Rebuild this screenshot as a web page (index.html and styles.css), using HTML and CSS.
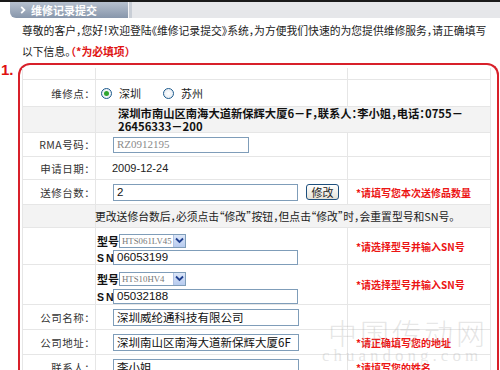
FILE: index.html
```html
<!DOCTYPE html>
<html lang="zh">
<head>
<meta charset="utf-8">
<title>维修记录提交</title>
<link rel="stylesheet" href="styles.css">
</head>
<body>
<div class="topbar">
  <div class="tab"><svg class="arrow" width="6" height="8" viewBox="0 0 6 8"><path d="M1.2 0.8 L4.4 4 L1.2 7.2" fill="none" stroke="#fff" stroke-width="1.8"/></svg>维修记录提交</div>
  <div class="sep"></div>
  <div class="fill"></div>
</div>
<div class="intro">尊敬的客户，您好！欢迎登陆《维修记录提交》系统，为方便我们快速的为您提供维修服务，请正确填写<br>以下信息。<span class="req">（*为必填项）</span></div>
<div class="main">
  <div class="num">1.</div>
  <div class="box">
    <div class="table">
      <div class="row r-empty"><div class="c1"></div><div class="c2"></div><div class="c3"></div></div>
      <div class="row r-radio">
        <div class="c1 label">维修点：</div>
        <div class="c2 radios">
          <span class="radio checked"></span><span class="rlabel">深圳</span>
          <span class="radio"></span><span class="rlabel">苏州</span>
        </div>
        <div class="c3"></div>
      </div>
      <div class="row r-addr gray">
        <div class="c1"></div>
        <div class="c23 addr">深圳市南山区南海大道新保辉大厦6－F，联系人：李小姐，电话：0755－<br>26456333－200</div>
      </div>
      <div class="row r-rma">
        <div class="c1 label">RMA号码：</div>
        <div class="c2 val"><div class="inp w136 rma">RZ0912195</div></div>
        <div class="c3"></div>
      </div>
      <div class="row r-date">
        <div class="c1 label">申请日期：</div>
        <div class="c2 val date">2009-12-24</div>
        <div class="c3"></div>
      </div>
      <div class="row r-count">
        <div class="c1 label">送修台数：</div>
        <div class="c2 val"><div class="inp w185 tall">2</div><div class="btn">修改</div></div>
        <div class="c3 err">*请填写您本次送修品数量</div>
      </div>
      <div class="row r-note gray">
        <div class="c1"></div>
        <div class="c23 note">更改送修台数后，必须点击“修改”按钮，但点击“修改”时，会重置型号和SN号。</div>
      </div>
      <div class="row r-model1">
        <div class="c1"></div>
        <div class="c2 model">
          <div class="mline"><span class="mlab">型号</span><div class="sel"><span>HTS061LV45</span><span class="dd"><svg width="9" height="7" viewBox="0 0 9 7"><path d="M1 1.5 L4.5 5 L8 1.5" fill="none" stroke="#1f3f8f" stroke-width="1.8"/></svg></span></div></div>
          <div class="mline"><span class="sn">S N</span><div class="inp w185">06053199</div></div>
        </div>
        <div class="c3 err">*请选择型号并输入SN号</div>
      </div>
      <div class="row r-model2">
        <div class="c1"></div>
        <div class="c2 model">
          <div class="mline"><span class="mlab">型号</span><div class="sel"><span>HTS10HV4</span><span class="dd"><svg width="9" height="7" viewBox="0 0 9 7"><path d="M1 1.5 L4.5 5 L8 1.5" fill="none" stroke="#1f3f8f" stroke-width="1.8"/></svg></span></div></div>
          <div class="mline"><span class="sn">S N</span><div class="inp w185">05032188</div></div>
        </div>
        <div class="c3 err">*请选择型号并输入SN号</div>
      </div>
      <div class="row r-std">
        <div class="c1 label">公司名称：</div>
        <div class="c2 val"><div class="inp w186 tall big">深圳威纶通科技有限公司</div></div>
        <div class="c3"></div>
      </div>
      <div class="row r-std">
        <div class="c1 label">公司地址：</div>
        <div class="c2 val"><div class="inp w186 tall big">深圳南山区南海大道新保辉大厦6F</div></div>
        <div class="c3 err">*请正确填写您的地址</div>
      </div>
      <div class="row r-std">
        <div class="c1 label">联系人：</div>
        <div class="c2 val"><div class="inp w186 tall big">李小姐</div></div>
        <div class="c3 err">*请填写您的姓名</div>
      </div>
    </div>
  </div>
</div>
<div class="watermark"><div class="wm1">中国传动网</div><div class="wm2">chuandong.com</div></div>
</body>
</html>
```

FILE: styles.css
```css
* { box-sizing: border-box; }
body {
  margin: 0;
  font-family: "Noto Sans CJK SC", "Noto Sans", sans-serif;
  font-size: 10.5px;
  font-feature-settings: "halt";
  color: #222;
  background: #fff;
  position: relative;
  overflow: hidden;
}
.topbar {
  display: flex;
  height: 18px;
  border-top: 2px solid #1a1a1a;
}
.tab {
  margin-left: 10px;
  width: 118px;
  height: 16px;
  background: linear-gradient(#b7c1cf, #8796ab);
  border-bottom-left-radius: 6px;
  color: #fff;
  font-weight: bold;
  font-size: 11px;
  line-height: 16px;
  padding-left: 10px;
  white-space: nowrap;
  display: flex;
  align-items: center;
}
.arrow { margin-right: 5px; flex: none; }
.sep { width: 4px; height: 16px; background: #c9ced6; border-left: 1px solid #f4f4f6; }
.fill { flex: 1; height: 16px; background: #e6e7ea; }
.intro {
  padding-left: 22px;
  margin-top: 2px;
  line-height: 21px;
  white-space: nowrap;
  color: #222;
  font-size: 10.8px;
}
.req { color: #e01414; font-weight: bold; }
.main {
  display: flex;
  align-items: flex-start;
}
.num {
  width: 18px;
  padding-left: 1px;
  font-family: "Liberation Sans", Arial, sans-serif;
  font-weight: bold;
  font-size: 15px;
  line-height: 16px;
  color: #e01010;
}
.box {
  flex: 1;
  margin-top: 1px;
  margin-right: 1px;
  border: 2px solid #d8202a;
  border-bottom: none;
  border-radius: 12px 12px 0 0;
  padding: 3px 6px 0 2px;
  height: 320px;
}
.table {
  border-left: 1px solid #e6e6e6;
  border-right: 1px solid #e6e6e6;
}
.row {
  display: flex;
  border-bottom: 1px solid #e6e6e6;
}
.gray { background: #f3f3f3; }
.c1 { width: 73px; border-right: 1px solid #e6e6e6; flex: none; }
.c2 { width: 252px; border-right: 1px solid #e6e6e6; flex: none; }
.c3 { flex: 1; }
.c23 { flex: 1; }
.label {
  text-align: right;
  padding-right: 5px;
  display: flex;
  align-items: center;
  justify-content: flex-end;
  color: #333;
  white-space: nowrap;
  letter-spacing: 0.5px;
}
.r-empty { height: 12px; }
.r-radio { height: 27px; }
.r-addr { height: 26px; }
.r-rma { height: 24px; }
.r-date { height: 23px; }
.r-count { height: 25px; }
.r-note { height: 23px; }
.r-model1 { height: 37px; }
.r-model2 { height: 40px; }
.r-std { height: 25px; }
.radios { display: flex; align-items: center; padding-left: 5px; }
.radio {
  width: 11px; height: 11px;
  border: 1px solid #1c5a8c;
  border-radius: 50%;
  background: radial-gradient(#fff, #dfe6ee);
  position: relative;
}
.radio.checked::after {
  content: "";
  position: absolute;
  left: 2px; top: 2px;
  width: 5px; height: 5px;
  border-radius: 50%;
  background: #2fa52f;
}
.rlabel { margin-left: 7px; margin-right: 22px; font-size: 11px; }
.addr {
  padding-left: 22px;
  font-weight: bold;
  font-size: 11.3px;
  line-height: 13px;
  white-space: nowrap;
  color: #111;
}
.val { display: flex; align-items: center; padding-left: 17px; }
.date { padding-left: 16px; font-family: "Liberation Sans", Arial, sans-serif; font-size: 11px; }
.inp {
  height: 15px;
  border: 1px solid #7f9db9;
  background: #fff;
  font-family: "Liberation Sans", Arial, sans-serif;
  font-size: 11.5px;
  line-height: 13px;
  padding-left: 3px;
  color: #111;
  white-space: nowrap;
  overflow: hidden;
}
.inp.tall { height: 17px; line-height: 15px; }
.inp.big { font-family: "Noto Sans CJK SC", sans-serif; font-size: 11.5px; }
.w136 { width: 136px; }
.w185 { width: 185px; }
.w186 { width: 186px; }
.rma { font-family: "Liberation Serif", serif; color: #8a8a8a; font-size: 11px; height: 16px; }
.btn {
  margin-left: 8px;
  width: 33px; height: 16px;
  border: 1px solid #1d4f7d;
  border-radius: 3px;
  background: linear-gradient(#ffffff, #e4e2d8);
  font-size: 11px;
  line-height: 14px;
  text-align: center;
}
.err {
  color: #ec1414;
  font-weight: bold;
  padding-left: 8px;
  display: flex;
  align-items: center;
  white-space: nowrap;
  font-size: 10px;
}
.note {
  display: flex;
  align-items: center;
  white-space: nowrap;
  margin-left: -1px;
  font-size: 10.8px;
}
.model { padding-top: 5px; padding-left: 1px; }
.r-model2 .model { padding-top: 6px; }
.mline { display: flex; align-items: center; height: 15px; }
.mline + .mline { margin-top: 2px; }
.r-model2 .mline + .mline { margin-top: 3px; }
.mlab { font-weight: bold; font-size: 11px; width: 22px; color: #111; white-space: nowrap; }
.sn { font-family: "Liberation Sans", Arial, sans-serif; font-weight: bold; font-size: 10.5px; width: 16px; color: #111; white-space: nowrap; letter-spacing: -0.5px; }
.sel {
  width: 67px; height: 14px;
  border: 1px solid #7f9db9;
  display: flex;
  align-items: center;
  justify-content: space-between;
  font-family: "Liberation Serif", serif;
  font-size: 8.8px;
  color: #777;
  padding-left: 2px;
  background: #fff;
  white-space: nowrap;
  overflow: hidden;
}
.dd {
  width: 12px; height: 12px;
  flex: none;
  background: linear-gradient(#dbe6f8, #b7cbef);
  border-left: 1px solid #b0c2e4;
  display: flex; align-items: center; justify-content: center;
}
.watermark {
  position: absolute;
  left: 328px;
  top: 316px;
  color: rgba(170,170,170,0.3);
  pointer-events: none;
  white-space: nowrap;
}
.wm1 { font-size: 29px; line-height: 32px; letter-spacing: 3px; font-family: "Noto Sans CJK SC", sans-serif; font-weight: 300; }
.wm2 { font-family: "Liberation Serif", serif; font-size: 17px; letter-spacing: 4px; line-height: 16px; margin-left: -6px; }
```
